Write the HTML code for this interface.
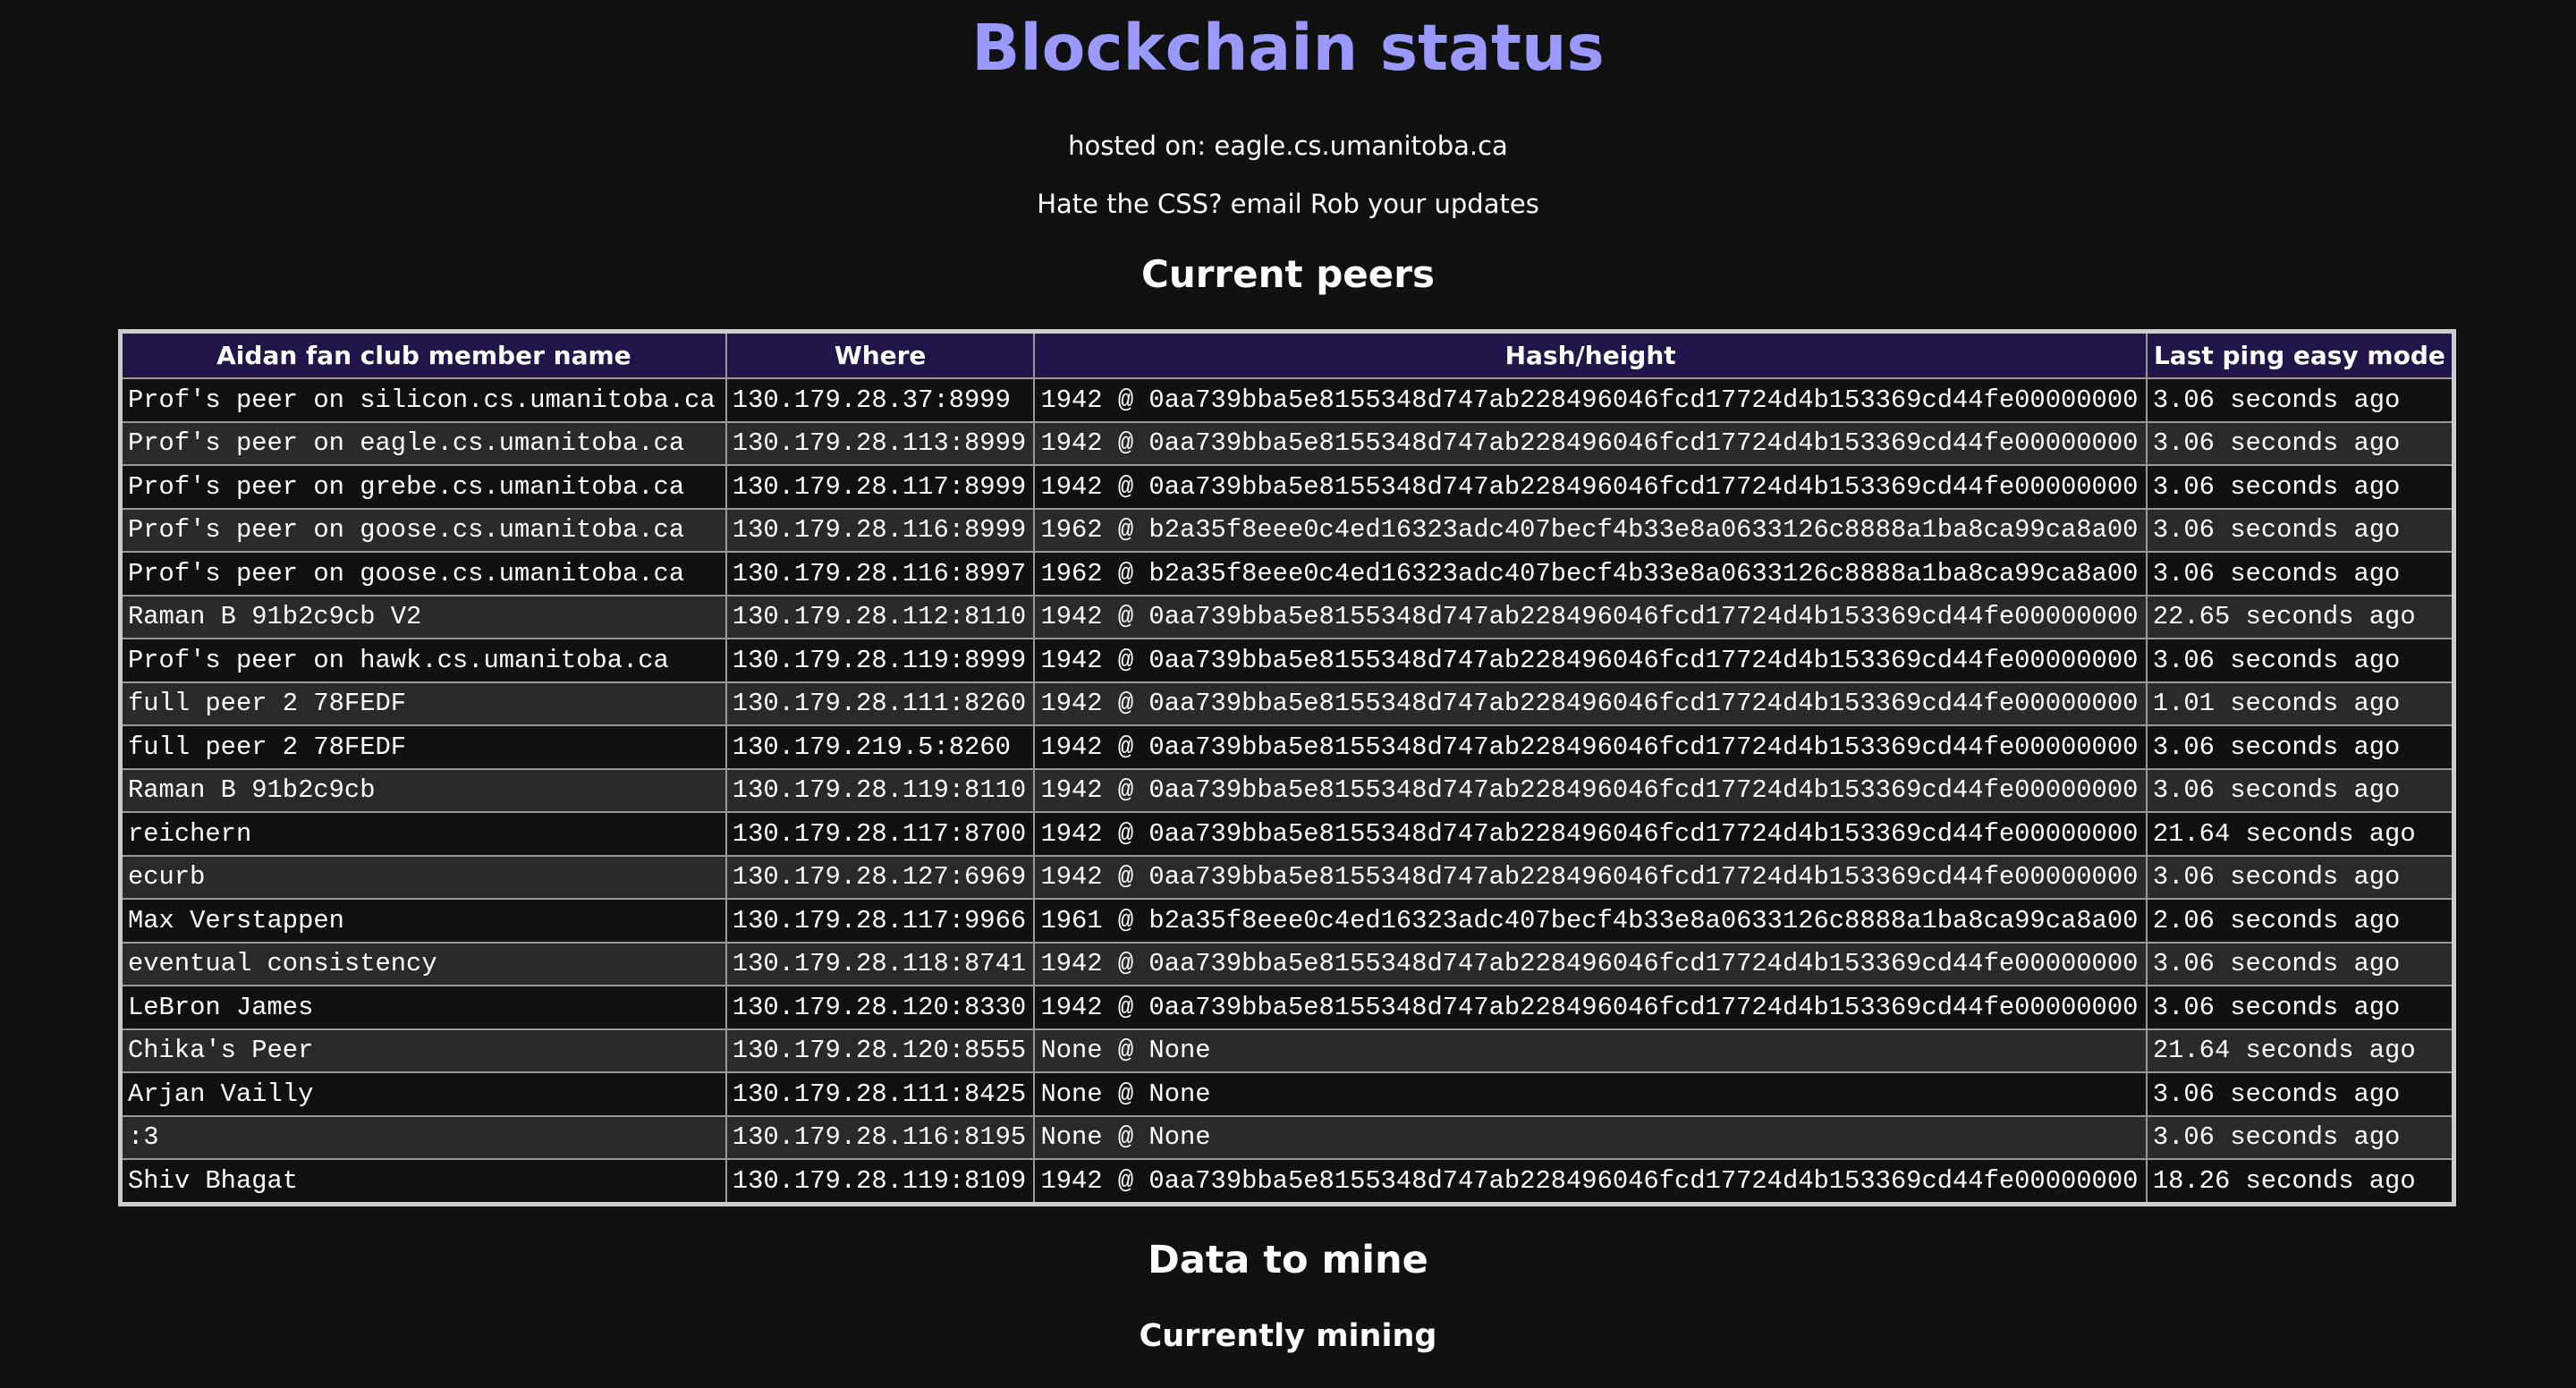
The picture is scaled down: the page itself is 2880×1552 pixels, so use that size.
<!DOCTYPE html>
<html><head><meta charset="utf-8"><style>
html,body{margin:0;padding:0;background:#111;width:2880px;height:1552px;overflow:hidden;color:#fff;font-family:"DejaVu Sans","Liberation Sans",sans-serif;}
.c{position:absolute;left:0;width:2880px;text-align:center;white-space:nowrap;}
h1{margin:0;font-size:71px;color:#9999ff;font-weight:bold;}
table{position:absolute;left:132px;top:368px;width:2614px;border-collapse:collapse;table-layout:fixed;border:5px solid #ccc;}
td,th{border:2px solid #999;padding:0 0 0 6px;white-space:nowrap;overflow:hidden;}
th{background:#22154a;height:49px;font-size:28px;font-weight:bold;text-align:center;padding:0;}
td{height:46.5px;font-family:"Liberation Mono",monospace;font-size:28.8px;}
tr:nth-child(odd) td{background:#2a2a2a;}
tr:nth-child(even) td{background:#111;}
</style></head><body>
<div class="c" style="top:12px"><h1>Blockchain status</h1></div>
<div class="c" style="top:146px;font-size:29px">hosted on: eagle.cs.umanitoba.ca</div>
<div class="c" style="top:211px;font-size:29px">Hate the CSS? email Rob your updates</div>
<div class="c" style="top:282px;font-size:42px;font-weight:bold">Current peers</div>
<table>
<colgroup><col style="width:676px"><col style="width:344px"><col style="width:1241px"><col style="width:343px"></colgroup>
<tr><th>Aidan fan club member name</th><th>Where</th><th>Hash/height</th><th>Last ping easy mode</th></tr>
<tr><td>Prof's peer on silicon.cs.umanitoba.ca</td><td>130.179.28.37:8999</td><td>1942 @ 0aa739bba5e8155348d747ab228496046fcd17724d4b153369cd44fe00000000</td><td>3.06 seconds ago</td></tr>
<tr><td>Prof's peer on eagle.cs.umanitoba.ca</td><td>130.179.28.113:8999</td><td>1942 @ 0aa739bba5e8155348d747ab228496046fcd17724d4b153369cd44fe00000000</td><td>3.06 seconds ago</td></tr>
<tr><td>Prof's peer on grebe.cs.umanitoba.ca</td><td>130.179.28.117:8999</td><td>1942 @ 0aa739bba5e8155348d747ab228496046fcd17724d4b153369cd44fe00000000</td><td>3.06 seconds ago</td></tr>
<tr><td>Prof's peer on goose.cs.umanitoba.ca</td><td>130.179.28.116:8999</td><td>1962 @ b2a35f8eee0c4ed16323adc407becf4b33e8a0633126c8888a1ba8ca99ca8a00</td><td>3.06 seconds ago</td></tr>
<tr><td>Prof's peer on goose.cs.umanitoba.ca</td><td>130.179.28.116:8997</td><td>1962 @ b2a35f8eee0c4ed16323adc407becf4b33e8a0633126c8888a1ba8ca99ca8a00</td><td>3.06 seconds ago</td></tr>
<tr><td>Raman B 91b2c9cb V2</td><td>130.179.28.112:8110</td><td>1942 @ 0aa739bba5e8155348d747ab228496046fcd17724d4b153369cd44fe00000000</td><td>22.65 seconds ago</td></tr>
<tr><td>Prof's peer on hawk.cs.umanitoba.ca</td><td>130.179.28.119:8999</td><td>1942 @ 0aa739bba5e8155348d747ab228496046fcd17724d4b153369cd44fe00000000</td><td>3.06 seconds ago</td></tr>
<tr><td>full peer 2 78FEDF</td><td>130.179.28.111:8260</td><td>1942 @ 0aa739bba5e8155348d747ab228496046fcd17724d4b153369cd44fe00000000</td><td>1.01 seconds ago</td></tr>
<tr><td>full peer 2 78FEDF</td><td>130.179.219.5:8260</td><td>1942 @ 0aa739bba5e8155348d747ab228496046fcd17724d4b153369cd44fe00000000</td><td>3.06 seconds ago</td></tr>
<tr><td>Raman B 91b2c9cb</td><td>130.179.28.119:8110</td><td>1942 @ 0aa739bba5e8155348d747ab228496046fcd17724d4b153369cd44fe00000000</td><td>3.06 seconds ago</td></tr>
<tr><td>reichern</td><td>130.179.28.117:8700</td><td>1942 @ 0aa739bba5e8155348d747ab228496046fcd17724d4b153369cd44fe00000000</td><td>21.64 seconds ago</td></tr>
<tr><td>ecurb</td><td>130.179.28.127:6969</td><td>1942 @ 0aa739bba5e8155348d747ab228496046fcd17724d4b153369cd44fe00000000</td><td>3.06 seconds ago</td></tr>
<tr><td>Max Verstappen</td><td>130.179.28.117:9966</td><td>1961 @ b2a35f8eee0c4ed16323adc407becf4b33e8a0633126c8888a1ba8ca99ca8a00</td><td>2.06 seconds ago</td></tr>
<tr><td>eventual consistency</td><td>130.179.28.118:8741</td><td>1942 @ 0aa739bba5e8155348d747ab228496046fcd17724d4b153369cd44fe00000000</td><td>3.06 seconds ago</td></tr>
<tr><td>LeBron James</td><td>130.179.28.120:8330</td><td>1942 @ 0aa739bba5e8155348d747ab228496046fcd17724d4b153369cd44fe00000000</td><td>3.06 seconds ago</td></tr>
<tr><td>Chika's Peer</td><td>130.179.28.120:8555</td><td>None @ None</td><td>21.64 seconds ago</td></tr>
<tr><td>Arjan Vailly</td><td>130.179.28.111:8425</td><td>None @ None</td><td>3.06 seconds ago</td></tr>
<tr><td>:3</td><td>130.179.28.116:8195</td><td>None @ None</td><td>3.06 seconds ago</td></tr>
<tr><td>Shiv Bhagat</td><td>130.179.28.119:8109</td><td>1942 @ 0aa739bba5e8155348d747ab228496046fcd17724d4b153369cd44fe00000000</td><td>18.26 seconds ago</td></tr>
</table>
<div class="c" style="top:1384px;font-size:43px;font-weight:bold">Data to mine</div>
<div class="c" style="top:1474px;font-size:35px;font-weight:bold">Currently mining</div>
</body></html>
